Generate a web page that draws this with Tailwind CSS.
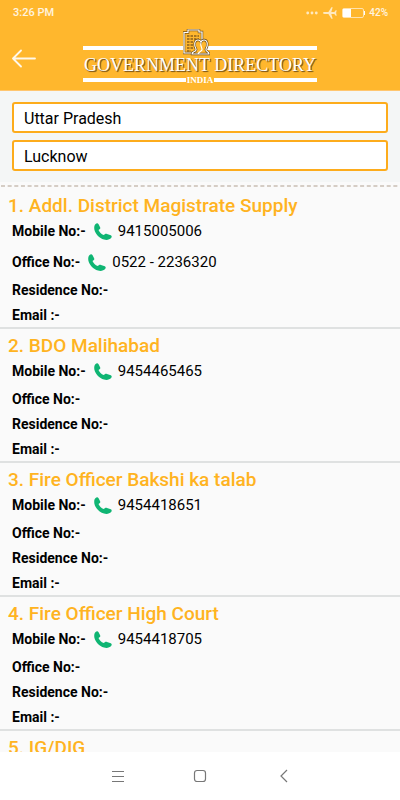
<!DOCTYPE html>
<html lang="en">
<head>
<meta charset="utf-8">
<meta name="viewport" content="width=device-width, initial-scale=1">
<title>Government Directory</title>
<script src="https://cdn.jsdelivr.net/npm/@tailwindcss/browser@4"></script>
</head>
<body class="flex h-screen flex-col overflow-hidden bg-[#fafafa] font-['Roboto',sans-serif] text-black">
<svg class="hidden" aria-hidden="true">
  <symbol id="phone" viewBox="0 0 18 18"><path fill="#0fb573" d="M1.600.900C2.600.200 3.900.100 4.600 1.200l1.500 3c.4.900.2 1.500-.6 2.100l-1 .7c.9 2.100 2.800 4.100 5.200 5.100l1.100-.9c.7-.5 1.500-.5 2.200-.2l3.800 1.300c1 .5 1.200 1.600.5 2.500-1.700 2-4.400 2.600-7.300 1.800C5.300 15.300 1.300 11 .400 6.800 0 4.300.200 2 1.600.900Z"/></symbol>
</svg>

<header class="shrink-0 border-b border-[#ffc670] bg-[#ffb72d] text-white">
  <div class="flex h-[25px] items-center justify-between pr-3 pl-[13px] text-[11px] font-medium text-white/85">
    <time class="pt-0.5">3:26 PM</time>
    <div class="flex items-center gap-[5px] text-[10px]">
      <svg class="h-1 w-3" viewBox="0 0 12 4" fill="#ffe9c0"><circle cx="1.700" cy="2" r="1.400"/><circle cx="6" cy="2" r="1.400"/><circle cx="10.300" cy="2" r="1.400"/></svg>
      <svg class="h-3 w-[14px]" viewBox="0 0 14 12" fill="#ffe9c0"><path d="M0 6c0-.6.700-.900 1.500-.900H5.400L8.400.300h1.300L8.300 5.100h3L12.700 3.200h1L13.100 6l.600 2.800h-1L11.300 6.900h-3l1.400 4.800H8.400L5.400 6.900H1.500C.7 6.900 0 6.600 0 6Z"/></svg>
      <svg class="h-[10px] w-6" viewBox="0 0 24 10"><rect x=".5" y=".5" width="21" height="9" rx="1.500" fill="none" stroke="#ffe2ad"/><rect x="1" y="1" width="8" height="8" fill="#fff"/><path d="M22 3h1v4h-1z" fill="#fff"/></svg>
      <span class="-ml-0.5">42%</span>
    </div>
  </div>
  <div class="grid h-[65px] grid-cols-[1fr_234px_1fr] items-start">
    <button type="button" aria-label="Back" class="mt-6 ml-3 h-[19px] w-6">
      <svg class="h-[19px] w-6" viewBox="0 0 24 19" fill="none" stroke="#fff8ea" stroke-width="1.800" stroke-linecap="round" stroke-linejoin="round"><path d="M23 9.500H1M9 1.500 1 9.500l8 8"/></svg>
    </button>
    <div class="relative pt-[21px]">
      <div class="h-1 bg-white"></div>
      <h1 class="flex h-7 items-center justify-center pt-0.5 font-['Liberation_Serif',serif] text-[18px] leading-5 whitespace-nowrap [text-shadow:1px_1px_0_#8a601c,1px_1px_1px_#6b4a10]">GOVERNMENT DIRECTORY</h1>
      <div class="flex h-1 items-center gap-px">
        <div class="h-1 flex-1 bg-white"></div>
        <span class="font-['Liberation_Serif',serif] text-[9px] leading-[9px] font-bold">INDIA</span>
        <div class="h-1 flex-1 bg-white"></div>
      </div>
      <svg class="absolute top-1 left-[100px] h-[27px] w-[27px]" viewBox="0 0 27 27" fill="none">
        <path d="M1 24V3.500h4V1h11v2h3v21Z" fill="#ffb72d" stroke="#775319" stroke-width="2.500"/>
        <path d="M1 24V3.500h4V1h11v2h3v21Z" stroke="#fff" stroke-width="1.200"/>
        <path d="M4 7h12M4 10h12M4 13h9M4 16h8M4 19h6M4 22h4" stroke="#8a601c" stroke-width="1.400" stroke-dasharray="2.500 1"/>
        <path d="M9 25c0-3 5-2 4-5-2-3-2-9 2-9 1.500 0 2.500 1 3 2 .5-1.300 1.500-2 3-2 4 0 4 6 2 9-1 3 3 2 3 5Z" fill="#ffb72d" stroke="#654510" stroke-width="2.400"/>
        <path d="M9 25c0-3 5-2 4-5-2-3-2-9 2-9 1.500 0 2.500 1 3 2 .5-1.300 1.500-2 3-2 4 0 4 6 2 9-1 3 3 2 3 5ZM18 13c-1 3 0 5 1 7 1 2-3 2-4 5" stroke="#fff" stroke-width="1.200"/>
      </svg>
    </div>
  </div>
</header>

<form class="flex shrink-0 flex-col gap-[7px] bg-[#f4f6f6] px-3 pt-[11px] pb-[11px]">
  <select aria-label="State" class="h-[31px] w-full appearance-none rounded-[3px] border-2 border-[#fdac1c] bg-white px-[10px] pt-0.5 text-[16px] leading-5"><option>Uttar Pradesh</option></select>
  <select aria-label="District" class="h-[31px] w-full appearance-none rounded-[3px] border-2 border-[#fdac1c] bg-white px-[10px] pt-0.5 text-[16px] leading-5"><option>Lucknow</option></select>
</form>
<svg class="h-[7px] w-full shrink-0" aria-hidden="true"><path d="M1 4h2000" stroke="#d5cdc5" stroke-width="2" stroke-dasharray="4 2.650"/></svg>

<main class="min-h-0 flex-1 overflow-hidden">
  <ol id="records"></ol>
</main>

<nav class="flex h-12 shrink-0 items-center justify-center gap-[66px] bg-white text-[#777]">
  <button type="button" aria-label="Menu"><svg class="h-4 w-4" viewBox="0 0 16 16" fill="none" stroke="currentColor"><path d="M2 3.500h12M2 8.500h12M2 13.500h12"/></svg></button>
  <button type="button" aria-label="Home"><svg class="h-4 w-4" viewBox="0 0 16 16" fill="none" stroke="currentColor" stroke-width="1.200"><rect x="2.500" y="2.500" width="11" height="11" rx="2.500"/></svg></button>
  <button type="button" aria-label="Back"><svg class="h-4 w-4" viewBox="0 0 16 16" fill="none" stroke="currentColor" stroke-width="1.200"><path d="M13 2 7 8l6 6"/></svg></button>
</nav>

<script>
const records = [
  ["Addl. District Magistrate Supply", "9415005006", "0522 - 2236320"],
  ["BDO Malihabad", "9454465465", ""],
  ["Fire Officer Bakshi ka talab", "9454418651", ""],
  ["Fire Officer High Court", "9454418705", ""],
  ["IG/DIG"]
];
const row = (label, number) => `<div class="flex items-center pt-0.5 ${number ? "h-[31px]" : "h-[25px]"}">
  <dt class="font-bold">${label}</dt>
  <dd>${number ? `<a class="flex items-center gap-[6px] pl-2 text-[15px]" href="tel:${number.replace(/\D/g, "")}"><svg class="h-[18px] w-[18px]"><use href="#phone"/></svg>${number}</a>` : ""}</dd>
</div>`;
const details = ([, mobile, office]) => mobile === undefined ? "" :
  `<dl class="px-3 text-[14px]">${row("Mobile No:-", mobile)}${row("Office No:-", office)}${row("Residence No:-", "")}${row("Email :-", "")}</dl>`;
document.getElementById("records").innerHTML = records.map((record, i) => `
<li class="border-b-2 border-[#dfe1e1]">
  <h2 class="px-2 pt-2 text-[19px] leading-[18px] font-medium text-[#ffb321]">${i + 1}. ${record[0]}</h2>
  ${details(record)}
</li>`).join("");
</script>
</body>
</html>
